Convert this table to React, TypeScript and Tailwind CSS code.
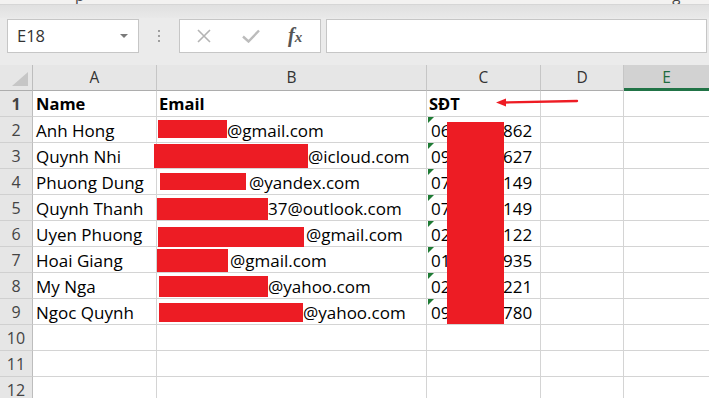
import React from "react";

type Row = {
  name: string;
  red: string;
  email: string;
  gap: string;
  p1: string;
  p2: string;
};

const rows: Row[] = [
  { name: "Anh Hong", red: "ml-[1px] w-[69px] mt-[3px] h-[18px]", email: "@gmail.com", gap: "ml-0", p1: "06", p2: "862" },
  { name: "Quynh Nhi", red: "-ml-[3px] w-[154px] mt-[1px] h-[24px]", email: "@icloud.com", gap: "ml-0", p1: "09", p2: "627" },
  { name: "Phuong Dung", red: "ml-[3px] w-[86px] mt-[4px] h-[17px]", email: "@yandex.com", gap: "ml-[3px]", p1: "07", p2: "149" },
  { name: "Quynh Thanh", red: "ml-0 w-[111px] mt-[3px] h-[22px]", email: "37@outlook.com", gap: "ml-0", p1: "07", p2: "149" },
  { name: "Uyen Phuong", red: "ml-[1px] w-[146px] mt-[6px] h-[20px]", email: "@gmail.com", gap: "ml-[2px]", p1: "02", p2: "122" },
  { name: "Hoai Giang", red: "ml-0 w-[71px] mt-[2px] h-[23px]", email: "@gmail.com", gap: "ml-[2px]", p1: "01", p2: "935" },
  { name: "My Nga", red: "ml-[2px] w-[109px] mt-[3px] h-[21px]", email: "@yahoo.com", gap: "ml-0", p1: "02", p2: "221" },
  { name: "Ngoc Quynh", red: "ml-[2px] w-[144px] mt-[4px] h-[19px]", email: "@yahoo.com", gap: "ml-0", p1: "09", p2: "780" },
];

const font = "font-['Open_Sans',sans-serif]";

function RowHead({ n }: { n: number }) {
  return (
    <div className="w-[33px] shrink-0 h-full bg-[#e6e6e6] border-r border-r-[#bdbdbd] border-b border-b-[#d0d0d0] flex items-center justify-center text-[16px] text-[#444] pt-[1px]">
      {n}
    </div>
  );
}

function GreenMark() {
  return (
    <div className="absolute left-[1px] top-0 w-0 h-0 border-t-[6px] border-t-[#1e7b34] border-r-[6px] border-r-transparent" />
  );
}

export default function App() {
  return (
    <div className={`w-[709px] h-[398px] overflow-hidden bg-white ${font} text-black`}>
      {/* top strip with cut-off ribbon text */}
      <div className="h-[4px] bg-[#f3f2f1] overflow-hidden flex text-[15px] leading-[15px] text-[#444]">
        <span className="ml-[75px] -mt-[12px]">p</span>
        <span className="ml-[588px] -mt-[12px]">g</span>
      </div>
      <div className="h-[1px] bg-[#d6d6d6]" />
      <div className="h-[13px] bg-gradient-to-b from-[#e0e0e0] to-[#e9e9e9]" />

      {/* formula bar */}
      <div className="h-[47px] bg-[#ebebeb] pt-[1px] flex items-start">
        <div className="ml-[7px] w-[132px] h-[34px] bg-white border border-[#c6c6c6] flex items-center pl-[9px] pr-[10px]">
          <span className="text-[16.5px] text-[#333] flex-1">E18</span>
          <svg width="8" height="4" viewBox="0 0 8 4">
            <path d="M0 0 L8 0 L4 4 Z" fill="#7a7a7a" />
          </svg>
        </div>
        <div className="w-[40px] h-[34px] flex flex-col items-center justify-center gap-[3px]">
          <div className="w-[2px] h-[2px] bg-[#9e9e9e]" />
          <div className="w-[2px] h-[2px] bg-[#9e9e9e]" />
          <div className="w-[2px] h-[2px] bg-[#9e9e9e]" />
        </div>
        <div className="w-[142px] h-[34px] bg-white border border-[#c6c6c6] flex items-center">
          <svg className="ml-[17px]" width="14" height="14" viewBox="0 0 14 14">
            <path d="M1 1 L13 13 M13 1 L1 13" stroke="#b4b4b4" strokeWidth="1.6" />
          </svg>
          <svg className="ml-[31px]" width="18" height="14" viewBox="0 0 18 14">
            <path d="M1 7.5 L6.5 12.5 L17 1.5" stroke="#bcbcbc" strokeWidth="2.4" fill="none" />
          </svg>
          <span className="ml-[28px] font-['Liberation_Serif',serif] italic font-bold text-[20px] text-[#555] leading-none -mt-[3px]">
            f<span className="text-[15px]">x</span>
          </span>
        </div>
        <div className="ml-[5px] w-[381px] h-[34px] bg-white border border-[#c6c6c6]" />
      </div>

      {/* grid */}
      <div className="relative">
        {/* column header */}
        <div className="h-[26px] flex bg-[#e6e6e6] text-[15.5px] text-[#333]">
          <div className="w-[33px] shrink-0 border-r border-r-[#bdbdbd] border-b border-b-[#adadad] relative">
            <div className="absolute right-[4px] bottom-[4px] w-0 h-0 border-l-[16px] border-l-transparent border-b-[14px] border-b-[#c6c6c6]" />
          </div>
          <div className="w-[124px] shrink-0 border-r border-r-[#c6c6c6] border-b border-b-[#adadad] flex items-center justify-center pt-[1px]">A</div>
          <div className="w-[270px] shrink-0 border-r border-r-[#c6c6c6] border-b border-b-[#adadad] flex items-center justify-center pt-[1px]">B</div>
          <div className="w-[114px] shrink-0 border-r border-r-[#c6c6c6] border-b border-b-[#adadad] flex items-center justify-center pt-[1px]">C</div>
          <div className="w-[83px] shrink-0 border-r border-r-[#c6c6c6] border-b border-b-[#adadad] flex items-center justify-center pt-[1px]">D</div>
          <div className="flex-1 bg-[#d2d2d2] border-b-[3px] border-b-[#217346] flex items-center justify-center pt-[2px] text-[#1e6b40]">E</div>
        </div>

        {/* row 1 */}
        <div className="h-[26px] flex text-[16.5px] font-bold">
          <RowHead n={1} />
          <div className="w-[124px] shrink-0 border-r border-b border-[#d4d4d4] flex items-center pl-[3px] pt-[2px]">Name</div>
          <div className="w-[270px] shrink-0 border-r border-b border-[#d4d4d4] flex items-center pl-[2px] pt-[2px]">Email</div>
          <div className="w-[114px] shrink-0 border-r border-b border-[#d4d4d4] flex items-center pl-[2px] pt-[2px]">SĐT</div>
          <div className="w-[83px] shrink-0 border-r border-b border-[#d4d4d4]" />
          <div className="flex-1 border-b border-[#d4d4d4]" />
        </div>

        {rows.map((r, i) => (
          <div key={i} className="h-[26px] flex text-[17px]">
            <RowHead n={i + 2} />
            <div className="w-[124px] shrink-0 border-r border-b border-[#d4d4d4] flex items-center pl-[3px] pt-[2px] whitespace-nowrap">
              {r.name}
            </div>
            <div className="w-[270px] shrink-0 border-r border-b border-[#d4d4d4] flex items-center whitespace-nowrap">
              <span className={`self-start shrink-0 bg-[#ed1c24] ${r.red}`} />
              <span className={`pt-[2px] ${r.gap}`}>{r.email}</span>
            </div>
            <div className="relative w-[114px] shrink-0 border-r border-b border-[#d4d4d4] flex items-center pl-[4px] pt-[2px] whitespace-nowrap">
              <GreenMark />
              <span className="w-[72px] shrink-0">{r.p1}</span>
              <span>{r.p2}</span>
            </div>
            <div className="w-[83px] shrink-0 border-r border-b border-[#d4d4d4]" />
            <div className="flex-1 border-b border-[#d4d4d4]" />
          </div>
        ))}

        {[10, 11, 12].map((n) => (
          <div key={n} className="h-[26px] flex text-[16.5px]">
            <RowHead n={n} />
            <div className="w-[124px] shrink-0 border-r border-b border-[#d4d4d4]" />
            <div className="w-[270px] shrink-0 border-r border-b border-[#d4d4d4]" />
            <div className="w-[114px] shrink-0 border-r border-b border-[#d4d4d4]" />
            <div className="w-[83px] shrink-0 border-r border-b border-[#d4d4d4]" />
            <div className="flex-1 border-b border-[#d4d4d4]" />
          </div>
        ))}

        {/* redaction over phone numbers */}
        <div className="absolute left-[447px] top-[57px] w-[57px] h-[202px] bg-[#ed1c24]" />

        {/* annotation arrow */}
        <svg className="absolute left-[494px] top-[31px]" width="86" height="12" viewBox="0 0 86 12">
          <path d="M83 5 L10 6.5" stroke="#ee1c24" strokeWidth="2.4" strokeLinecap="round" />
          <path d="M2 6.6 L12 2.6 L12 10.4 Z" fill="#ee1c24" />
        </svg>
      </div>
    </div>
  );
}
